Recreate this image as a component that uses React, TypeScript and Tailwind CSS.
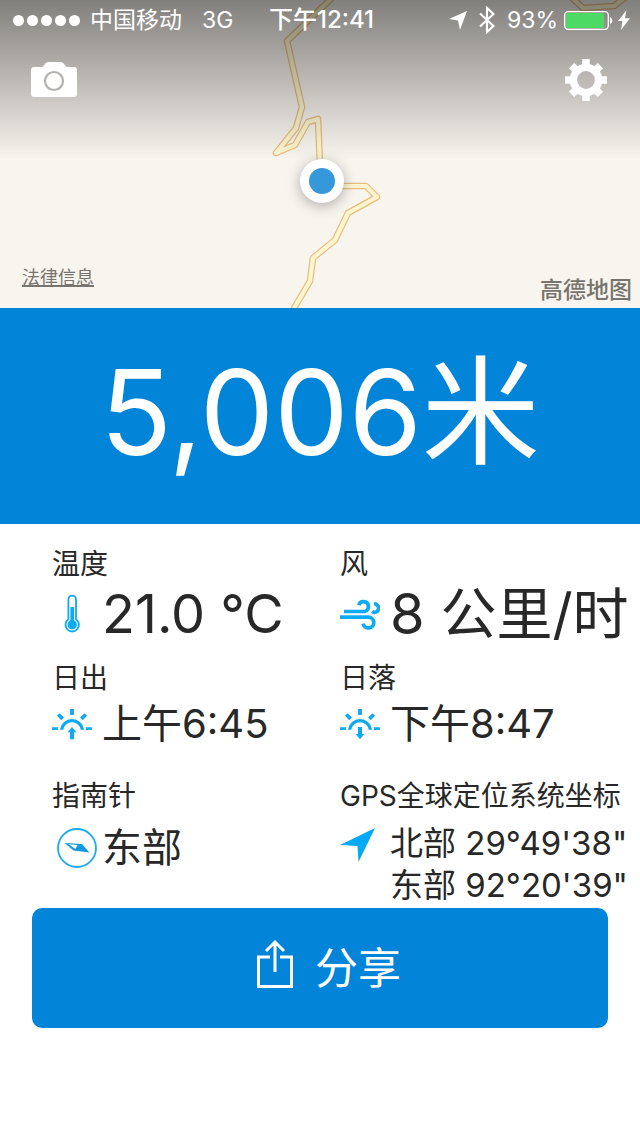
import type { ReactNode } from "react";

const ROAD =
  "M332 -2L287 41L302 107L296 128L276 153L295 145L308 122L318 119L320 165";
const ROAD_SOUTH = "M340 186H366L377 197L348 213L335 240L313 258L310 281L293 310";
const ROAD_EAST = "M571 -3L583 8L614 6L626 -3";

interface ReadingProps {
  label: string;
  icon: ReactNode;
  valueClass: string;
  children: ReactNode;
}

function Reading({ label, icon, valueClass, children }: ReadingProps) {
  return (
    <div className="min-w-0">
      <dt className="text-[28px] leading-9 whitespace-nowrap">{label}</dt>
      <dd className="flex items-center whitespace-nowrap">
        <span className="w-[50px] shrink-0">{icon}</span>
        <span className={valueClass}>{children}</span>
      </dd>
    </div>
  );
}

function MapBackground() {
  return (
    <svg
      className="absolute inset-0 w-full h-full"
      viewBox="0 0 640 308"
      preserveAspectRatio="xMidYMin slice"
      fill="none"
      strokeLinejoin="round"
      aria-hidden="true"
    >
      {[ROAD, ROAD_SOUTH, ROAD_EAST].map((d) => (
        <g key={d}>
          <path d={d} stroke="#e8bd80" strokeWidth="6.6" />
          <path d={d} stroke="#fdf6cf" strokeWidth="4.2" />
        </g>
      ))}
    </svg>
  );
}

function ThermometerIcon() {
  return (
    <svg className="w-10 h-10" viewBox="0 0 40 40" fill="none" aria-hidden="true">
      <path
        d="M16.4 5.4a3.8 3.8 0 0 1 7.6 0V25.3a6.7 6.7 0 1 1-7.6 0Z"
        stroke="#0eaaf2"
        strokeWidth="1.8"
      />
      <path d="M20.2 13V28" stroke="#0eaaf2" strokeWidth="3.6" />
      <circle cx="20.2" cy="30.7" r="4.7" fill="#0eaaf2" />
    </svg>
  );
}

function WindIcon() {
  return (
    <svg
      className="w-10 h-10"
      viewBox="0 0 40 40"
      fill="none"
      stroke="#0eaaf2"
      strokeWidth="3.7"
      aria-hidden="true"
    >
      <path d="M4 17.5H24.5a5 5 0 1 0-5.8-6.4" />
      <path d="M0 23.2H28.5a5.4 5.4 0 1 1-5.4 6.5" />
      <path d="M34 10a4.2 4.2 0 1 1-2 7.6" />
    </svg>
  );
}

function SunIcon({ rising }: { rising: boolean }) {
  return (
    <svg
      className="w-10 h-10 mb-3"
      viewBox="0 0 40 40"
      fill="none"
      stroke="#0eaaf2"
      strokeWidth="3.8"
      aria-hidden="true"
    >
      <path d="M9.5 25.8a10.6 10.6 0 0 1 21 0" strokeWidth="3.3" />
      <path d="M20 5v6M6.3 10.5l4.3 4.3M33.700 10.5l-4.3 4.3" />
      <path d="M0 24.6H6M34 24.6H40" strokeWidth="2.8" />
      {rising ? (
        <path d="M20 23l4.4 5.2h-2.4v7h-4v-7h-2.4Z" fill="#0eaaf2" stroke="none" />
      ) : (
        <path d="M20 35.200l4.4-5.2h-2.4v-7h-4v7h-2.4Z" fill="#0eaaf2" stroke="none" />
      )}
    </svg>
  );
}

function CompassIcon() {
  return (
    <svg className="w-10 h-10 ml-[5px]" viewBox="0 0 40 40" fill="none" aria-hidden="true">
      <circle cx="20" cy="20" r="19" stroke="#1eaaf0" strokeWidth="1.8" />
      <path d="M7.500 15L25 16L32.500 24.500L16.500 22.500Z" fill="#1298e0" />
      <path d="M11.500 16.300L20.500 17L18.500 21Z" fill="#fff" />
    </svg>
  );
}

export default function App() {
  return (
    <main className="min-h-screen overflow-x-hidden bg-white text-[#282828] font-['Inter','Noto_Sans_CJK_SC',sans-serif]">
      <header className="relative bg-[#f8f4ee] overflow-hidden">
        <MapBackground />
        <div className="absolute inset-x-0 top-0 h-40 bg-linear-to-b from-black/48 to-black/0" />

        <div className="relative flex flex-col h-[308px] text-white">
          <div className="flex items-center h-10 pl-[13px] pr-[10px] text-[23px] leading-10 whitespace-nowrap">
            <div className="flex flex-1 items-center">
              <span className="flex gap-[3px]">
                {[0, 1, 2, 3, 4].map((dot) => (
                  <i key={dot} className="size-[11px] rounded-full bg-white" />
                ))}
              </span>
              <span className="ml-[10px]">中国移动</span>
              <span className="ml-5">3G</span>
            </div>
            <time className="text-[24px] font-medium">下午12:41</time>
            <div className="flex flex-1 items-center justify-end">
              <svg className="w-[18px] h-[19px]" viewBox="0 0 18 19" fill="#fff" aria-hidden="true">
                <path d="M18 0L11 19L9 9.500L0 8Z" />
              </svg>
              <svg
                className="w-4 h-7 ml-3"
                viewBox="0 0 16 28"
                fill="none"
                stroke="#fff"
                strokeWidth="2.1"
                aria-hidden="true"
              >
                <path d="M1 7.5L14.500 20L8 26V2L14.500 8L1 20.500" />
              </svg>
              <span className="ml-3">93%</span>
              <svg className="w-[50px] h-[19px] ml-[6px]" viewBox="0 0 50 19" fill="none" aria-hidden="true">
                <rect x="0.7" y="0.7" width="43.6" height="17.6" rx="3.5" stroke="#fff" strokeWidth="1.3" />
                <rect x="2" y="2" width="38" height="15" rx="1.5" fill="#4cd964" />
                <path d="M46 6a3.8 3.8 0 0 1 0 7Z" fill="#fff" />
              </svg>
              <svg className="w-3 h-5 ml-1" viewBox="0 0 12 20" fill="#fff" aria-hidden="true">
                <path d="M8.500 0L0 11H4.500L3 20L12 8.300H7Z" />
              </svg>
            </div>
          </div>

          <div className="flex justify-between pt-[18px] pl-[30px] pr-8">
            <button type="button" aria-label="相机" className="h-11">
              <svg className="w-12 h-11" viewBox="0 0 48 44" aria-hidden="true">
                <path
                  d="M4 9H11.500C14 9 15 4 18.500 4H30.500C34 4 35 9 37.500 9H44a3 3 0 0 1 3 3V36a3 3 0 0 1-3 3H4a3 3 0 0 1-3-3V12a3 3 0 0 1 3-3Z"
                  fill="#fff"
                />
                <circle cx="24" cy="23" r="9" fill="none" stroke="#b4b2ae" strokeWidth="2.2" />
              </svg>
            </button>
            <button type="button" aria-label="设置" className="h-11">
              <svg className="w-11 h-11" viewBox="-22 -22 44 44" fill="none" stroke="#fff" aria-hidden="true">
                <circle r="12.6" strokeWidth="7.400" />
                <path
                  d="M0-21V-13M0 21V13M-21 0H-13M21 0H13M-14.400-14.400L-9.500-9.500M14.400-14.400L9.500-9.500M-14.400 14.400L-9.500 9.500M14.400 14.400L9.500 9.500"
                  strokeWidth="7.500"
                />
              </svg>
            </button>
          </div>

          <div className="flex flex-1 items-end justify-between pl-[22px] pr-2 pb-1 text-[#77746e]">
            <a href="#legal" className="mb-3 text-[18px] leading-7 underline decoration-2 underline-offset-1">
              法律信息
            </a>
            <span className="text-[23px] leading-7 font-medium">高德地图</span>
          </div>
        </div>

        {/* current position */}
        <div className="absolute left-1/2 top-[159px] -ml-5 flex size-11 items-center justify-center rounded-full bg-white shadow-[0_3px_14px_rgba(0,0,0,0.3)]">
          <div className="size-[26px] rounded-full bg-[#3498db]" />
        </div>
      </header>

      <h1 className="flex h-[216px] items-center justify-center bg-[#0285d9] pb-2 text-[118px] leading-none text-white whitespace-nowrap">
        5,006米
      </h1>

      <dl className="grid grid-cols-2 gap-y-[14px] pt-[22px] pl-[52px] pr-3">
        <Reading label="温度" icon={<ThermometerIcon />} valueClass="text-[54px] leading-[64px]">
          21.0 °C
        </Reading>
        <Reading label="风" icon={<WindIcon />} valueClass="text-[56px] leading-[64px]">
          8 公里/时
        </Reading>
        <Reading label="日出" icon={<SunIcon rising />} valueClass="text-[40px] leading-[56px] mb-3">
          上午6:45
        </Reading>
        <Reading label="日落" icon={<SunIcon rising={false} />} valueClass="text-[40px] leading-[56px] mb-3">
          下午8:47
        </Reading>
        <Reading label="指南针" icon={<CompassIcon />} valueClass="text-[40px] leading-[68px]">
          东部
        </Reading>
        <Reading
          label="GPS全球定位系统坐标"
          icon={
            <svg className="w-9 h-9 mb-7" viewBox="0 0 36 36" fill="#03a9f4" aria-hidden="true">
              <path d="M35 0L18.500 34L17.500 18L0 17Z" />
            </svg>
          }
          valueClass="mt-2 text-[33px] leading-[42px]"
        >
          北部 29°49'38"
          <br />
          东部 92°20'39"
        </Reading>
      </dl>

      <div className="px-8 pt-[2px] pb-8">
        <button
          type="button"
          className="flex h-[120px] w-full items-center justify-center gap-5 rounded-[10px] bg-[#0285d9] pl-4 text-[43px] text-white"
        >
          <svg
            className="w-10 h-[50px] mb-2"
            viewBox="0 0 40 50"
            fill="none"
            stroke="#fff"
            strokeWidth="3"
            aria-hidden="true"
          >
            <path d="M15 18H3.500V47.500H36.500V18H25M20 33V3M11 12L20 3L29 12" />
          </svg>
          分享
        </button>
      </div>
    </main>
  );
}
